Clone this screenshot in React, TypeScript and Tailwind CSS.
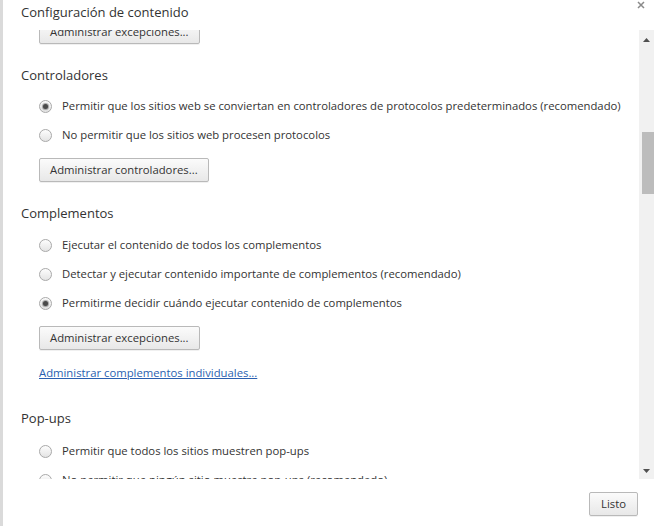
import React from "react";

const font = "font-['Open_Sans','Noto_Sans',sans-serif]";

function Radio({ checked, label }: { checked?: boolean; label: string }) {
  return (
    <div className="flex h-[29px] items-center pl-[18px]">
      <span className="flex h-[13px] w-[13px] shrink-0 items-center justify-center rounded-full border border-[#a9a9a9] bg-gradient-to-b from-[#fdfdfd] to-[#e4e4e4]">
        {checked && <span className="h-[5px] w-[5px] rounded-full bg-[#4a4a4a] shadow-[0_0_1px_1px_rgba(80,80,80,0.5)]" />}
      </span>
      <span className="ml-[10px] whitespace-nowrap text-[11.3px] text-[#333]">{label}</span>
    </div>
  );
}

function Btn({ children, className = "" }: { children: React.ReactNode; className?: string }) {
  return (
    <button className={`flex h-[24px] items-center whitespace-nowrap rounded-[2px] border border-[#b9b9b9] bg-gradient-to-b from-[#fbfbfb] to-[#e8e8e8] px-[10px] text-[11.3px] text-[#333] shadow-[0_1px_0_rgba(0,0,0,0.06)] ${className}`}>
      {children}
    </button>
  );
}

function Heading({ children, className = "" }: { children: React.ReactNode; className?: string }) {
  return <div className={`flex h-[20px] items-center pt-[2px] text-[13px] text-[#333] ${className}`}>{children}</div>;
}

export default function App() {
  return (
    <div className={`relative flex h-[526px] w-[654px] flex-col overflow-hidden border-l-[3px] border-[#dadada] bg-white ${font}`}>
      {/* cabecera */}
      <div className="flex h-[30px] shrink-0 items-start pl-[18px] pt-[3px] text-[13px] text-[#333]">
        Configuración de contenido
      </div>
      <svg className="absolute right-[9px] top-[1px]" width="8" height="8" viewBox="0 0 8 8">
        <path d="M1 1 L7 7 M7 1 L1 7" stroke="#8a8a8a" strokeWidth="1.5" />
      </svg>

      <div className="flex h-[449px] shrink-0">
        <div className="flex-1 overflow-hidden pl-[18px]">
          <Btn className="-mt-[10px] ml-[18px]">Administrar excepciones...</Btn>

          <Heading className="mt-[21px]">Controladores</Heading>
          <div className="mt-[7px]">
            <Radio checked label="Permitir que los sitios web se conviertan en controladores de protocolos predeterminados (recomendado)" />
            <Radio label="No permitir que los sitios web procesen protocolos" />
          </div>
          <Btn className="ml-[18px] mt-[8px]">Administrar controladores...</Btn>

          <Heading className="mt-[21px]">Complementos</Heading>
          <div className="mt-[8px]">
            <Radio label="Ejecutar el contenido de todos los complementos" />
            <Radio label="Detectar y ejecutar contenido importante de complementos (recomendado)" />
            <Radio checked label="Permitirme decidir cuándo ejecutar contenido de complementos" />
          </div>
          <Btn className="ml-[18px] mt-[8px]">Administrar excepciones...</Btn>
          <a className="ml-[18px] mt-[14px] block h-[18px] text-[11.3px] leading-[18px] text-[#2a5fb0] underline">
            Administrar complementos individuales...
          </a>

          <Heading className="mt-[26px]">Pop-ups</Heading>
          <div className="mt-[9px]">
            <Radio label="Permitir que todos los sitios muestren pop-ups" />
            <Radio label="No permitir que ningún sitio muestre pop-ups (recomendado)" />
          </div>
        </div>

        {/* barra de desplazamiento */}
        <div className="flex w-[15px] shrink-0 flex-col items-center bg-[#f1f1f1] pt-[1px]">
          <div className="flex h-[17px] w-full items-center justify-center">
            <svg width="7" height="4" viewBox="0 0 7 4"><path d="M0 4 L3.5 0 L7 4Z" fill="#505050" /></svg>
          </div>
          <div className="mt-[84px] h-[62px] w-[12px] self-end bg-[#bcbcbc]" />
          <div className="flex-1" />
          <div className="flex h-[17px] w-full items-center justify-center">
            <svg width="7" height="4" viewBox="0 0 7 4"><path d="M0 0 L7 0 L3.5 4Z" fill="#505050" /></svg>
          </div>
        </div>
      </div>

      <div className="flex flex-1 items-start justify-end pr-[16px] pt-[13px]">
        <Btn className="h-[24px] px-[11px]">Listo</Btn>
      </div>
    </div>
  );
}
